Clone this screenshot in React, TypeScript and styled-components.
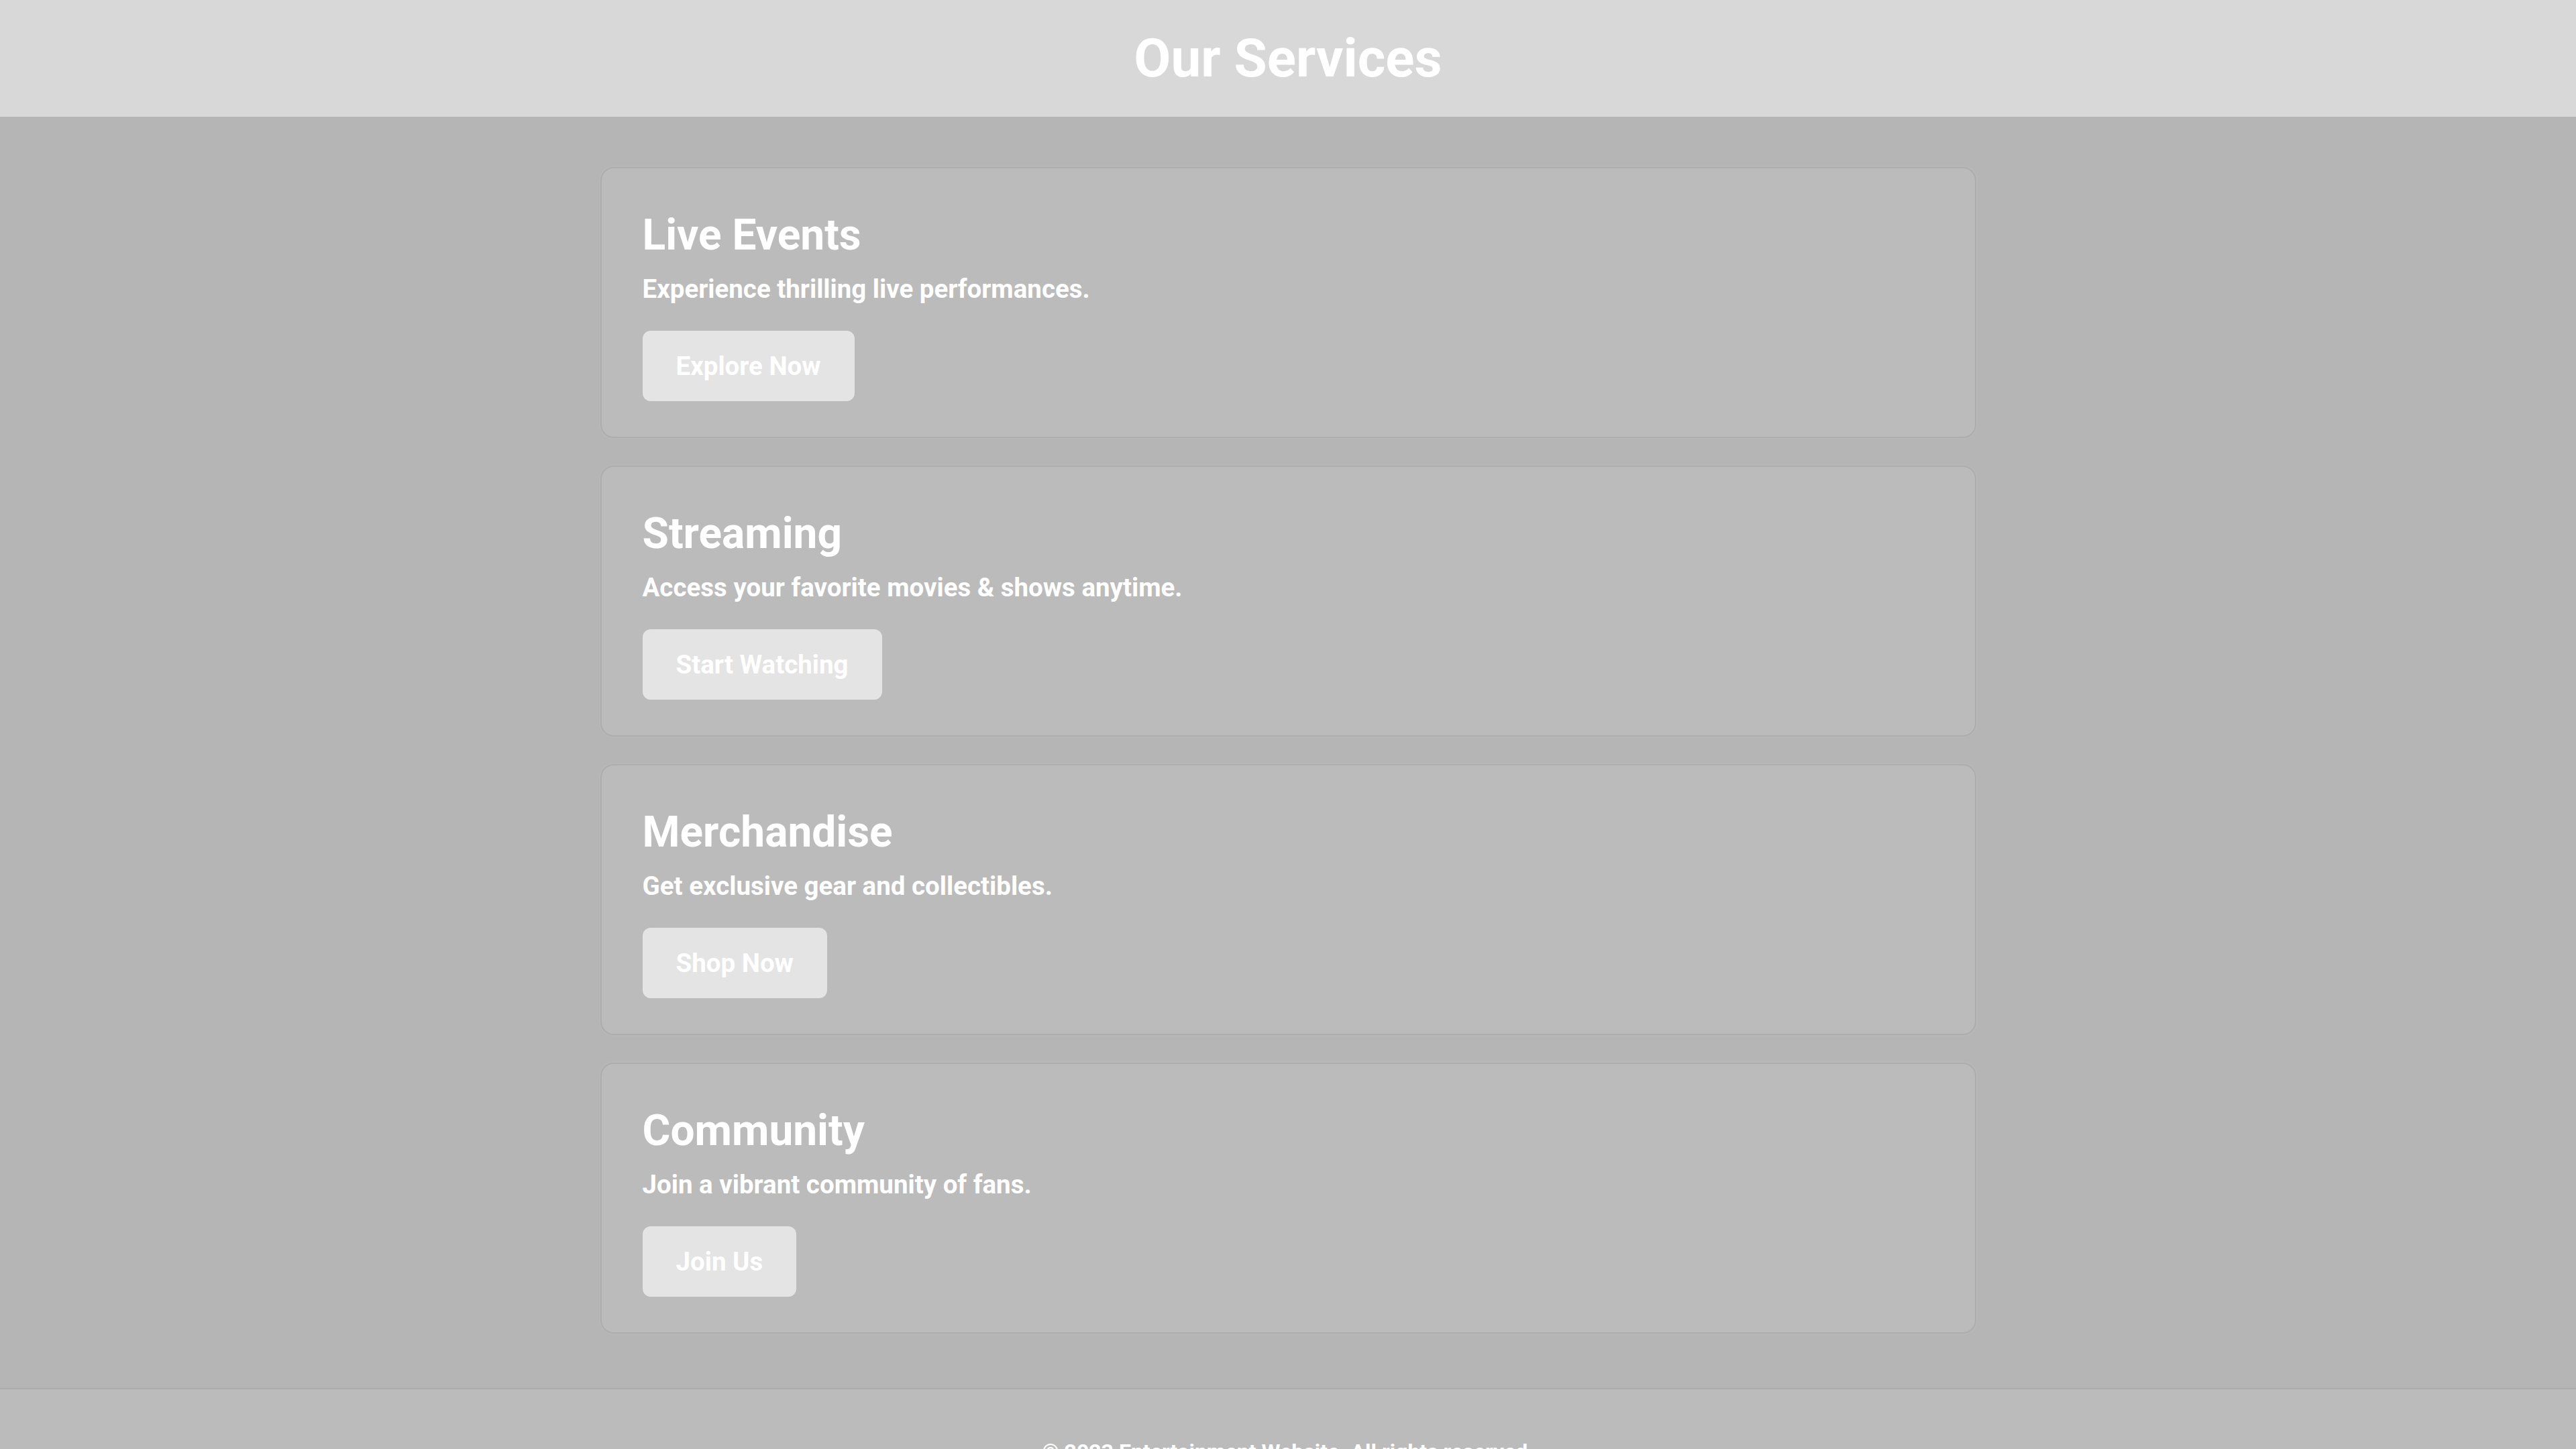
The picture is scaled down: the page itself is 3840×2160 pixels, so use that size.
import React from "react";
import styled, { createGlobalStyle } from "styled-components";

const GlobalStyle = createGlobalStyle`
  html, body {
    margin: 0;
    padding: 0;
  }
  body {
    font-family: Roboto, "Liberation Sans", Arial, sans-serif;
    background: #b5b5b5;
    color: #ffffff;
  }
  * { box-sizing: border-box; }
`;

const Page = styled.div`
  display: flex;
  flex-direction: column;
  min-height: 100vh;
`;

const Header = styled.header`
  background: #d8d8d8;
  height: 174px;
  display: flex;
  align-items: center;
  justify-content: center;
`;

const Title = styled.h1`
  margin: 0;
  font-size: 80px;
  font-weight: 700;
  color: #ffffff;
  line-height: 94px;
`;

const Main = styled.main`
  background: #b5b5b5;
  padding: 75px 0 81px;
  display: flex;
  flex-direction: column;
  align-items: center;
  gap: 41px;
`;

const Card = styled.section`
  width: 2051px;
  height: 404px;
  background: #bbbbbb;
  border: 2px solid #adadad;
  border-radius: 20px;
  box-shadow: 0 0 4px rgba(255, 255, 255, 0.12);
  padding: 62px 61px 0;
  display: flex;
  flex-direction: column;
  align-items: flex-start;
`;

const CardTitle = styled.h2`
  margin: 0 0 19px;
  font-size: 64px;
  font-weight: 700;
  line-height: 75px;
  color: #ffffff;
`;

const CardText = styled.p`
  margin: 0 0 39px;
  font-size: 38.5px;
  font-weight: 700;
  line-height: 47px;
  color: #ffffff;
`;

const Button = styled.button`
  font-family: Roboto, "Liberation Sans", Arial, sans-serif;
  font-size: 38.5px;
  font-weight: 700;
  line-height: 47px;
  color: #ffffff;
  background: #e4e4e4;
  border: none;
  border-radius: 12px;
  padding: 29px 50px;
  cursor: pointer;
`;

const Footer = styled.footer`
  background: #bbbbbb;
  border-top: 2px solid #acacac;
  padding: 74px 0 74px;
  text-align: center;
`;

const FooterText = styled.p`
  margin: 0;
  font-size: 32px;
  font-weight: 700;
  line-height: 38px;
  color: #ffffff;
`;

const services = [
  { title: "Live Events", text: "Experience thrilling live performances.", cta: "Explore Now" },
  { title: "Streaming", text: "Access your favorite movies & shows anytime.", cta: "Start Watching" },
  { title: "Merchandise", text: "Get exclusive gear and collectibles.", cta: "Shop Now" },
  { title: "Community", text: "Join a vibrant community of fans.", cta: "Join Us" },
];

export default function App() {
  return (
    <>
      <GlobalStyle />
      <Page>
        <Header>
          <Title>Our Services</Title>
        </Header>
        <Main>
          {services.map((s) => (
            <Card key={s.title}>
              <CardTitle>{s.title}</CardTitle>
              <CardText>{s.text}</CardText>
              <Button>{s.cta}</Button>
            </Card>
          ))}
        </Main>
        <Footer>
          <FooterText>© 2023 Entertainment Website. All rights reserved.</FooterText>
        </Footer>
      </Page>
    </>
  );
}
